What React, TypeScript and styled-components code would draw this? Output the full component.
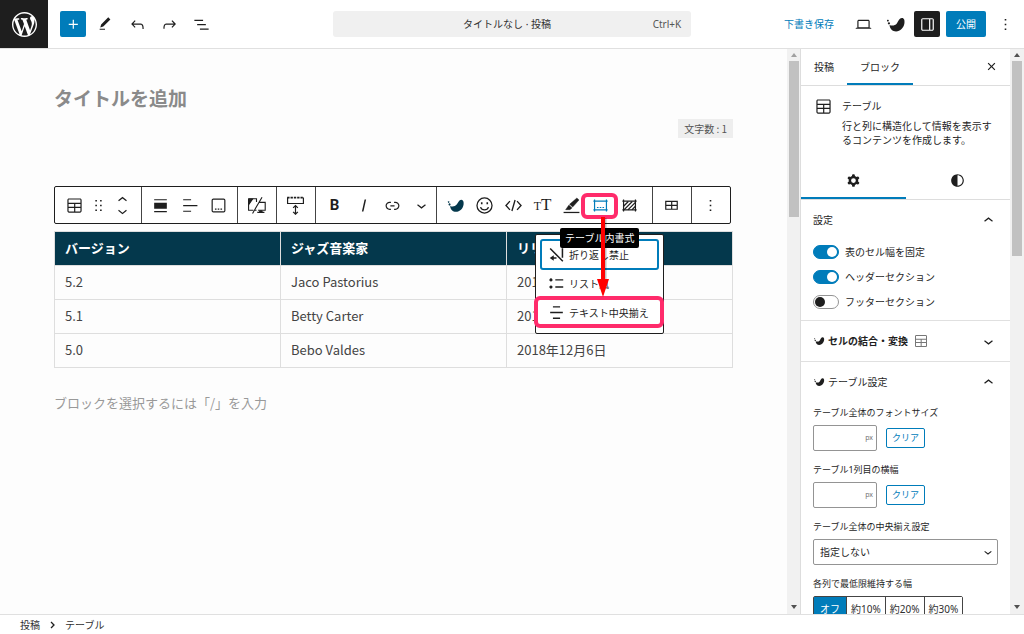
import React, { useState } from "react";
import styled, { createGlobalStyle, css } from "styled-components";

const blue = "#007cba";
const ink = "#1e1e1e";
const navy = "#04384c";
const pink = "#ff2b6b";

const Global = createGlobalStyle`
  * { box-sizing: border-box; }
  body {
    margin: 0;
    background: #fff;
    color: ${ink};
    font: 10px/14px "Noto Sans", "Noto Sans CJK JP", sans-serif;
  }
  button, input, select {
    font: inherit;
    color: inherit;
    margin: 0;
  }
  button {
    background: none;
    border: 0;
    padding: 0;
    cursor: pointer;
  }
  svg { display: block; flex: none; }
`;

/* ---------- icons ---------- */

const paths: Record<string, string> = {
  plus: "M11 12.5V17.5H12.5V12.5H17.5V11H12.5V6H11V11H6V12.5H11Z",
  edit: "M20.1 5.1L16.9 2 6.2 12.7l-1.3 4.4 4.5-1.3L20.1 5.1zM4 20.8h8v-1.5H4v1.5z",
  undo: "M18.3 11.7c-.6-.6-1.4-.9-2.3-.9H6.7l2.9-3.3-1.1-1-4.5 5L8.5 16l1-1-2.7-2.7H16c.5 0 .9.2 1.3.5 1 1 1 3.4 1 4.5v.3h1.5v-.2c0-1.5 0-4.3-1.5-5.7z",
  redo: "M15.6 6.5l-1.1 1 2.9 3.3H8c-.9 0-1.7.3-2.3.9-1.4 1.5-1.4 4.2-1.4 5.6v.2h1.5v-.3c0-1.1 0-3.5 1-4.5.3-.3.7-.5 1.3-.5h9.2L14.5 15l1.1 1.1 4.6-4.6-4.6-5z",
  list: "M3 6h11v1.5H3V6Zm3.5 5.5h11V13h-11v-1.5ZM21 17H10v1.5h11V17Z",
  desktop: "M20.5 16h-.7V8c0-1.1-.9-2-2-2H6.2c-1.1 0-2 .9-2 2v8h-.7c-.8 0-1.5.7-1.5 1.5h20c0-.8-.7-1.5-1.5-1.5zM5.7 8c0-.3.2-.5.5-.5h11.6c.3 0 .5.2.5.5v7.6H5.7V8z",
  drawer: "M18 4H6c-1.1 0-2 .9-2 2v12c0 1.1.9 2 2 2h12c1.1 0 2-.9 2-2V6c0-1.1-.9-2-2-2zm-4 14.5H6c-.3 0-.5-.2-.5-.5V6c0-.3.2-.5.5-.5h8v13zm4.5-.5c0 .3-.2.5-.5.5h-2.5v-13H18c.3 0 .5.2.5.5v12z",
  more: "M13 19h-2v-2h2v2zm0-6h-2v-2h2v2zm0-6h-2V5h2v2z",
  close: "M12 13.06l3.712 3.713 1.061-1.06L13.061 12l3.712-3.712-1.06-1.06L12 10.938 8.288 7.227l-1.061 1.06L10.939 12l-3.712 3.712 1.06 1.061L12 13.061z",
  blockTable: "M19 3H5c-1.1 0-2 .9-2 2v14c0 1.1.9 2 2 2h14c1.1 0 2-.9 2-2V5c0-1.1-.9-2-2-2zM5 4.5h14c.3 0 .5.2.5.5v3.5h-15V5c0-.3.2-.5.5-.5zm8 5.5h6.5v3.5H13V10zm-1.5 3.5h-7V10h7v3.5zm-7 5.5v-4h7v4.5H5c-.3 0-.5-.2-.5-.5zm14.5.5h-6V15h6.5v4c0 .3-.2.5-.5.5z",
  table: "M4 6v11.5h16V6H4zm1.5 1.5h6V11h-6V7.5zm0 8.5v-3.5h6V16h-6zm13 0H13v-3.5h5.5V16zM13 11V7.5h5.5V11H13z",
  drag: "M8 7h2V5H8v2zm0 6h2v-2H8v2zm0 6h2v-2H8v2zm6-14v2h2V5h-2zm0 8h2v-2h-2v2zm0 6h2v-2h-2v2z",
  up: "M6.5 12.4L12 8l5.5 4.4-.9 1.2L12 10l-4.5 3.6-1-1.2z",
  down: "M17.5 11.6L12 16l-5.5-4.4.9-1.2L12 14l4.5-3.6 1 1.2z",
  movers: "M6.5 5.4L12 1l5.5 4.4-.9 1.2L12 3l-4.5 3.6-1-1.2zM17.5 18.6L12 23l-5.5-4.4.9-1.2L12 21l4.5-3.6 1 1.2z",
  align: "M4 5.5h16V4H4v1.5zM4 16h16V8.5H4V16zM4 20.5h16V19H4v1.5z",
  textLeft: "M4 5.5h10V4H4v1.5zM4 12.8h18v-1.5H4v1.5zM4 20h10v-1.5H4V20z",
  italic: "M13.4 4.5L10 19.5h1.9l3.4-15z",
  link: "M15.6 7.2H14v1.5h1.6c2 0 3.7 1.7 3.7 3.7s-1.7 3.7-3.7 3.7H14v1.5h1.6c2.8 0 5.2-2.3 5.2-5.2 0-2.9-2.3-5.2-5.2-5.2zM4.7 12.4c0-2 1.7-3.7 3.7-3.7H10V7.2H8.4c-2.9 0-5.2 2.3-5.2 5.2 0 2.9 2.3 5.2 5.2 5.2H10v-1.5H8.4c-2 0-3.7-1.7-3.7-3.7zm4.6.9h5.3v-1.5H9.3v1.5z",
  bird: "M5.200 12.600c3 1.300 6.500.6 8.300-1.800 2-2.800 2.900-5.800 5.700-6.100 2.600-.2 3.500 2.600 3 6-.8 5.200-4.700 9.300-9.600 9.300-4 0-7-2.800-7.400-7.400zM3.300 6.500a1 1 0 1 0 .01 0zM4.500 9.300a1.300 1.300 0 1 0 .01 0z",
  centerLines: "M7.5 4h9v1.7h-9zM4 11.2h16v1.7H4zM7.5 18.4h9v1.7h-9z",
  listStyle: "M5 5.5a2 2 0 1 0 .01 0zM5 14.5a2 2 0 1 0 .01 0zM10.5 6.6h10v1.7h-10zM10.5 15.6h10v1.7h-10z",
  contrast: "M12 4c-4.4 0-8 3.6-8 8s3.6 8 8 8 8-3.6 8-8-3.6-8-8-8zm0 1.5c3.6 0 6.5 2.9 6.5 6.5s-2.9 6.5-6.5 6.5v-13z",
  cog: "M10.289 4.836A1 1 0 0111.275 4h1.306a1 1 0 01.987.836l.244 1.466c.787.26 1.503.679 2.108 1.218l1.393-.522a1 1 0 011.216.437l.653 1.13a1 1 0 01-.23 1.273l-1.148.944a6.025 6.025 0 010 2.435l1.149.946a1 1 0 01.23 1.272l-.653 1.13a1 1 0 01-1.216.437l-1.394-.522c-.605.54-1.32.958-2.108 1.218l-.244 1.466a1 1 0 01-.987.836h-1.306a1 1 0 01-.986-.836l-.244-1.466a5.995 5.995 0 01-2.108-1.218l-1.394.522a1 1 0 01-1.217-.436l-.653-1.131a1 1 0 01.23-1.272l1.149-.946a6.026 6.026 0 010-2.435l-1.148-.944a1 1 0 01-.23-1.272l.653-1.131a1 1 0 011.217-.437l1.393.522a5.994 5.994 0 012.108-1.218l.244-1.466zM14.929 12a3 3 0 11-6 0 3 3 0 016 0z",
};

const Icon = ({ name, size = 19 }: { name: string; size?: number }) => (
  <svg width={size} height={size} viewBox="0 0 24 24" fill="currentColor" aria-hidden="true">
    <path d={paths[name]} fillRule="evenodd" />
  </svg>
);

const Line = ({ width = 1.5, children }: { width?: number; children: React.ReactNode }) => (
  <svg
    width="19"
    height="19"
    viewBox="0 0 24 24"
    fill="none"
    stroke="currentColor"
    strokeWidth={width}
    aria-hidden="true"
  >
    {children}
  </svg>
);

const CaptionIcon = () => (
  <Line>
    <rect x="4" y="4" width="16" height="16" rx="1.5" />
    <path d="M7.5 16.5h2M11 16.5h2M14.5 16.5h2" />
  </Line>
);

const DeviceIcon = () => (
  <Line width={1.4}>
    <path d="M2 3.5v14.5h6M2 3.5h10v4M15 8h8v10h-9M9 18h3M19 1.5 7 22" />
    <path d="M2 4h5l-5 7z" fill="currentColor" />
    <path d="M13 21.5h9V20h-2l-1-2h-3l-1 2h-2z" fill="currentColor" stroke="none" />
  </Line>
);

const MarginIcon = () => (
  <Line width={1.5}>
    <path d="M2 2v7.5h20V2" />
    <path d="M1.5 2h21" strokeDasharray="3 1.2" strokeWidth="2" />
    <path d="M12 12.5v10M9 15l3-3 3 3M9 20l3 3 3-3" />
  </Line>
);

const SmileIcon = () => (
  <Line width={1.6}>
    <circle cx="12" cy="12" r="9.5" />
    <path d="M7 14c.8 2.5 2.7 3.6 5 3.6s4.2-1.1 5-3.6" />
    <path d="M8.5 7.8v2.5M15.5 7.8v2.5" strokeWidth="2" />
  </Line>
);

const CodeIcon = () => (
  <Line width={1.7}>
    <path d="M7.5 6.5 2.5 12l5 5.5M16.5 6.5l5 5.5-5 5.5M14 5l-4 14" />
  </Line>
);

const MarkerIcon = () => (
  <Line width={1.6}>
    <path d="M2 20.8h20" />
    <path
      d="M18.8 2.5 21.5 5l-8 9-4-3.5zM8.7 11.5l4 3.5-2.7 2.3H4.5z"
      fill="currentColor"
      strokeWidth="0.5"
    />
  </Line>
);

const CellFormatIcon = () => (
  <Line width={1.5}>
    <path d="M4.5 4.5v15M19.5 4.5v15M3 6.5h18M3 17.5h18" />
    <path d="M7.5 14.5h2M11 14.5h2M14.5 14.5h2" />
  </Line>
);

const HatchIcon = () => (
  <Line width={1.5}>
    <path d="M4.5 4.5v15M19.5 4.5v15M3 6.5h18M3 17.5h18" />
    <path d="m4.5 13 6-6M5 17.5 15.5 7M10 17.5l9.500-9.500M15 17.5l4.500-4.500" strokeWidth="1.6" />
  </Line>
);

const NoWrapIcon = () => (
  <Line width={1.9}>
    <path d="M4 4.5 20 20.5M19.5 4v12M12 16.5H5" />
    <path d="M3.5 16.5l5-3.5v7z" fill="currentColor" stroke="none" />
  </Line>
);

const WordPressLogo = () => (
  <svg width="25" height="25" viewBox="0 0 20 20" fill="#fff" aria-hidden="true">
    <path d="M20 10c0-5.51-4.49-10-10-10C4.48 0 0 4.49 0 10c0 5.52 4.48 10 10 10 5.51 0 10-4.48 10-10zM7.78 15.37L4.37 6.22c.55-.02 1.17-.08 1.17-.08.5-.06.44-1.13-.06-1.11 0 0-1.45.11-2.37.11-.18 0-.37 0-.58-.01C4.12 2.69 6.87 1.11 10 1.11c2.33 0 4.45.87 6.05 2.34-.68-.11-1.65.39-1.65 1.58 0 .74.45 1.36.9 2.1.35.61.55 1.36.55 2.46 0 1.49-1.4 5-1.4 5l-3.03-8.37c.54-.02.82-.17.82-.17.5-.05.44-1.25-.06-1.22 0 0-1.44.12-2.38.12-.87 0-2.33-.12-2.33-.12-.5-.03-.56 1.2-.06 1.22l.92.08 1.26 3.41zM17.41 10c.24-.64.74-1.87.43-4.25.7 1.29 1.05 2.71 1.05 4.25 0 3.29-1.73 6.24-4.4 7.78.97-2.59 1.94-5.2 2.92-7.78zM6.1 18.09C3.12 16.65 1.11 13.53 1.11 10c0-1.3.23-2.48.72-3.59C3.25 10.3 4.67 14.2 6.1 18.09zm4.03-6.63l2.58 6.98c-.86.29-1.76.45-2.71.45-.79 0-1.57-.11-2.29-.33.81-2.38 1.62-4.74 2.42-7.1z" />
  </svg>
);

/* ---------- page frame ---------- */

const Shell = styled.div`
  display: flex;
  flex-direction: column;
  height: 100vh;
  overflow: hidden;
`;

const Header = styled.header`
  flex: none;
  display: grid;
  grid-template-columns: 1fr 35% 1fr;
  align-items: center;
  height: 48px;
  box-shadow: 0 1px #e0e0e0;
  position: relative;
`;

const HeaderSide = styled.div<{ $end?: boolean }>`
  display: flex;
  align-items: center;
  height: 100%;
  gap: 6px;
  ${(p) => p.$end && css`
    justify-content: flex-end;
    padding-right: 6px;
  `}
`;

const Home = styled.a`
  display: grid;
  place-items: center;
  width: 48px;
  height: 48px;
  margin-right: 6px;
  background: ${ink};
`;

const HeaderButton = styled.button<{ $fill?: string }>`
  display: grid;
  place-items: center;
  width: 26px;
  height: 26px;
  border-radius: 2px;
  background: ${(p) => p.$fill ?? "transparent"};
  color: ${(p) => (p.$fill ? "#fff" : ink)};
`;

const PublishButton = styled(HeaderButton)`
  width: 40px;
`;

const SaveDraft = styled.button`
  margin-right: 10px;
  color: ${blue};
`;

const CommandBar = styled.button`
  display: grid;
  grid-template-columns: 1fr auto 1fr;
  align-items: center;
  height: 26px;
  padding: 0 10px 0 0;
  border-radius: 3px;
  background: #f0f0f0;
  color: #2f2f2f;
`;

const Shortcut = styled.kbd`
  justify-self: end;
  font: inherit;
  color: #555;
`;

const Body = styled.div`
  flex: 1;
  min-height: 0;
  display: flex;
`;

const Canvas = styled.main`
  flex: 1;
  min-width: 0;
  padding: 35px 54px 0;
  background: #fdfdfd;
  overflow: hidden;
  font-family: "Noto Sans CJK JP", sans-serif;
`;

const Footer = styled.footer`
  flex: none;
  display: flex;
  align-items: center;
  gap: 10px;
  height: 20px;
  padding: 0 20px;
  border-top: 1px solid #e0e0e0;
`;

const Crumb = styled.a`
  color: #2f2f2f;
  text-decoration: none;
`;

/* ---------- scroll bar ---------- */

const Track = styled.div<{ $w: number }>`
  flex: none;
  display: flex;
  flex-direction: column;
  align-items: center;
  width: ${(p) => p.$w}px;
  padding: 5px 0;
  background: #f1f1f1;
`;

const Thumb = styled.div<{ $share: number }>`
  flex: none;
  width: 10px;
  height: ${(p) => p.$share}%;
  margin: 4px 0 auto;
  background: #c1c1c1;
`;

const ScrollBar = ({ share, width, top = "#505050" }: { share: number; width: number; top?: string }) => (
  <Track $w={width}>
    <svg width="6" height="4" viewBox="0 0 6 4"><path d="M0 4l3-4 3 4z" fill={top} /></svg>
    <Thumb $share={share} />
    <svg width="6" height="4" viewBox="0 0 6 4"><path d="M0 0l3 4 3-4z" fill="#505050" /></svg>
  </Track>
);

/* ---------- editor canvas ---------- */

const TitleInput = styled.input`
  display: block;
  width: 100%;
  height: 28px;
  padding: 0;
  border: 0;
  outline: 0;
  background: none;
  font-size: 19px;
  font-weight: 700;
  color: #333;
  &::placeholder { color: #8a8a8a; opacity: 1; }
`;

const Count = styled.div`
  width: fit-content;
  margin: 8px 0 48px auto;
  padding: 0 6px;
  background: #eee;
  color: #555;
  line-height: 19px;
`;

const BlockArea = styled.section`
  position: relative;
`;

const Toolbar = styled.div`
  display: flex;
  width: fit-content;
  height: 38px;
  margin-bottom: 7px;
  border: 1px solid ${ink};
  border-radius: 2px;
  background: #fff;
`;

const Group = styled.div<{ $w: number; $pad?: number }>`
  display: flex;
  align-items: center;
  width: ${(p) => p.$w}px;
  padding-left: ${(p) => p.$pad ?? 4}px;
  & + & { border-left: 1px solid #444; }
`;

const Tool = styled.button<{ $tone?: string; $slim?: boolean }>`
  display: flex;
  align-items: baseline;
  justify-content: center;
  width: ${(p) => (p.$slim ? 24 : 29)}px;
  color: ${(p) => p.$tone ?? ink};
`;

const BoldMark = styled.b`
  font: 700 15px/19px Roboto, sans-serif;
`;

const SerifMark = styled.span<{ $small?: boolean }>`
  font: ${(p) => (p.$small ? 12 : 17)}px/19px "Liberation Serif", serif;
`;

const DataTable = styled.table`
  width: 100%;
  table-layout: fixed;
  border-collapse: collapse;
  font-size: 13px;
  line-height: 18px;
  color: #444;
  th, td {
    height: 34px;
    padding: 0 10px 2px;
    border: 1px solid #dedede;
    text-align: left;
  }
  th {
    background: ${navy};
    color: #fff;
    font-weight: 700;
  }
`;

const Appender = styled.p`
  margin: 25px 0 0;
  color: #999;
  font-size: 13px;
  line-height: 20px;
`;

/* Floating layers, measured from the top left of the block area. */

const Popover = styled.div`
  position: absolute;
  top: 48px;
  left: 481px;
  width: 129px;
  padding: 5px 5px 6px;
  border: 1px solid ${ink};
  border-radius: 2px;
  background: #fff;
  font-family: "Noto Sans", "Noto Sans CJK JP", sans-serif;
`;

const MenuItem = styled.button<{ $focused?: boolean }>`
  display: flex;
  align-items: center;
  gap: 3px;
  width: 100%;
  height: 29px;
  padding-left: 6px;
  border-radius: 2px;
  white-space: nowrap;
  ${(p) => p.$focused && css`outline: 2px solid ${blue}; outline-offset: -1px;`}
`;

const Tooltip = styled.div`
  position: absolute;
  top: 42px;
  left: 506px;
  padding: 0 5px;
  border-radius: 2px;
  background: #000;
  color: #fff;
  line-height: 20px;
`;

const Ring = styled.div<{ $x: number; $y: number; $w: number; $h: number }>`
  position: absolute;
  left: ${(p) => p.$x}px;
  top: ${(p) => p.$y}px;
  width: ${(p) => p.$w}px;
  height: ${(p) => p.$h}px;
  border: 4px solid ${pink};
  border-radius: 6px;
  pointer-events: none;
`;

const Arrow = styled.svg`
  position: absolute;
  top: 31px;
  left: 541px;
  pointer-events: none;
`;

/* ---------- settings sidebar ---------- */

const Sidebar = styled.aside`
  flex: none;
  width: 210px;
  border-left: 1px solid #ddd;
  overflow: hidden;
  background: #fff;
`;

const TabBar = styled.div`
  display: flex;
  align-items: stretch;
  height: 38px;
  padding-right: 9px;
  border-bottom: 1px solid #ddd;
`;

const Tab = styled.button<{ $active?: boolean }>`
  display: grid;
  place-items: center;
  padding: 0 13px;
  box-shadow: ${(p) => (p.$active ? `inset 0 -2px ${blue}` : "none")};
`;

const CloseButton = styled.button`
  margin-left: auto;
`;

const Card = styled.div`
  display: flex;
  gap: 9px;
  padding: 11px 12px 0 13px;
`;

const CardTitle = styled.h2`
  margin: 2px 0 6px;
  font-size: 10px;
  font-weight: 400;
`;

const CardText = styled.p`
  margin: 0;
`;

const IconTabs = styled.div`
  display: grid;
  grid-template-columns: 1fr 1fr;
  height: 38px;
  margin-top: 15px;
  border-bottom: 1px solid #ddd;
`;

const Panel = styled.section`
  padding: 0 12px;
  & + & { border-top: 1px solid #e0e0e0; }
`;

const PanelHead = styled.button<{ $bold?: boolean }>`
  display: flex;
  align-items: center;
  width: 100%;
  height: 40px;
  gap: 3px;
  font-weight: ${(p) => (p.$bold ? 700 : 400)};
  & > :last-child { margin-left: auto; }
`;

const PanelBody = styled.div`
  padding: 4px 0 1px;
`;

const MutedIcon = styled.span`
  margin-left: 2px;
  color: #777;
`;

const ToggleRow = styled.label`
  display: flex;
  align-items: center;
  gap: 6px;
  height: 16px;
  margin-bottom: 9px;
`;

const Toggle = styled.input`
  appearance: none;
  width: 26px;
  height: 14px;
  border: 1px solid #949494;
  border-radius: 7px;
  background: #fff;
  &::before {
    content: "";
    display: block;
    width: 10px;
    height: 10px;
    margin: 1px;
    border-radius: 50%;
    background: ${ink};
  }
  &:checked {
    border-color: ${blue};
    background: ${blue};
  }
  &:checked::before {
    margin-left: 13px;
    background: #fff;
  }
`;

const Label = styled.label`
  display: block;
  height: 14px;
  margin-bottom: 5px;
  font-size: 9px;
`;

const Field = styled.div`
  margin-bottom: 12px;
`;

const FieldRow = styled.div`
  display: flex;
  align-items: center;
  gap: 9px;
`;

const UnitBox = styled.div`
  display: flex;
  align-items: center;
  width: 64px;
  height: 26px;
  padding: 0 3px;
  border: 1px solid #949494;
  border-radius: 2px;
`;

const NumberInput = styled.input`
  flex: 1;
  min-width: 0;
  padding: 0;
  border: 0;
  outline: 0;
  background: none;
`;

const Unit = styled.span`
  font-size: 7px;
  color: #757575;
`;

const ClearButton = styled.button`
  height: 20px;
  padding: 0 5px;
  border: 1px solid ${blue};
  border-radius: 2px;
  color: ${blue};
  font-size: 9px;
`;

const SelectWrap = styled.div`
  display: grid;
  align-items: center;
  & > * { grid-area: 1 / 1; }
  & > svg { justify-self: end; margin-right: 2px; pointer-events: none; }
`;

const Select = styled.select`
  appearance: none;
  width: 100%;
  height: 26px;
  padding: 0 6px;
  border: 1px solid #949494;
  border-radius: 2px;
  background: #fff;
`;

const Segments = styled.div`
  display: flex;
  width: fit-content;
  border: 1px solid #444;
  border-radius: 2px;
`;

const Segment = styled.button<{ $on?: boolean }>`
  min-width: 32px;
  height: 23px;
  padding: 0 4px;
  background: ${(p) => (p.$on ? blue : "#fff")};
  color: ${(p) => (p.$on ? "#fff" : "#2f2f2f")};
  & + & { border-left: 1px solid #444; }
`;

const rows = [
  ["5.2", "Jaco Pastorius", "2019年5月7日"],
  ["5.1", "Betty Carter", "2019年2月21日"],
  ["5.0", "Bebo Valdes", "2018年12月6日"],
];

const widths = ["オフ", "約10%", "約20%", "約30%"];

const SizeField = ({ id, label }: { id: string; label: string }) => (
  <Field>
    <Label htmlFor={id}>{label}</Label>
    <FieldRow>
      <UnitBox>
        <NumberInput id={id} />
        <Unit>px</Unit>
      </UnitBox>
      <ClearButton>クリア</ClearButton>
    </FieldRow>
  </Field>
);

export default function App() {
  const [minWidth, setMinWidth] = useState("オフ");
  return (
    <Shell>
      <Global />
      <Header>
        <HeaderSide>
          <Home href="#" aria-label="WordPress"><WordPressLogo /></Home>
          <HeaderButton $fill={blue} aria-label="追加"><Icon name="plus" /></HeaderButton>
          <HeaderButton aria-label="ツール"><Icon name="edit" size={16} /></HeaderButton>
          <HeaderButton aria-label="元に戻す"><Icon name="undo" /></HeaderButton>
          <HeaderButton aria-label="やり直す"><Icon name="redo" /></HeaderButton>
          <HeaderButton aria-label="リスト表示"><Icon name="list" /></HeaderButton>
        </HeaderSide>
        <CommandBar>
          <span />
          <span>タイトルなし · 投稿</span>
          <Shortcut>Ctrl+K</Shortcut>
        </CommandBar>
        <HeaderSide $end>
          <SaveDraft>下書き保存</SaveDraft>
          <HeaderButton aria-label="プレビュー"><Icon name="desktop" /></HeaderButton>
          <HeaderButton aria-label="SWELL"><Icon name="bird" size={21} /></HeaderButton>
          <HeaderButton $fill={ink} aria-label="設定"><Icon name="drawer" /></HeaderButton>
          <PublishButton $fill={blue}>公開</PublishButton>
          <HeaderButton aria-label="オプション"><Icon name="more" /></HeaderButton>
        </HeaderSide>
      </Header>

      <Body>
        <Canvas>
          <TitleInput aria-label="タイトル" placeholder="タイトルを追加" />
          <Count>文字数 : 1</Count>
          <BlockArea>
            <Toolbar role="toolbar">
              <Group $w={86} $pad={7}>
                <Tool $slim aria-label="テーブル"><Icon name="blockTable" /></Tool>
                <Tool $slim aria-label="ドラッグ"><Icon name="drag" /></Tool>
                <Tool $slim aria-label="移動"><Icon name="movers" /></Tool>
              </Group>
              <Group $w={96}>
                <Tool aria-label="配置"><Icon name="align" /></Tool>
                <Tool aria-label="文字の配置"><Icon name="textLeft" /></Tool>
                <Tool aria-label="キャプション"><CaptionIcon /></Tool>
              </Group>
              <Group $w={39}><Tool aria-label="デバイス制限"><DeviceIcon /></Tool></Group>
              <Group $w={39}><Tool aria-label="余白"><MarginIcon /></Tool></Group>
              <Group $w={121}>
                <Tool aria-label="太字"><BoldMark>B</BoldMark></Tool>
                <Tool aria-label="イタリック"><Icon name="italic" /></Tool>
                <Tool aria-label="リンク"><Icon name="link" /></Tool>
                <Tool aria-label="さらに表示"><Icon name="down" /></Tool>
              </Group>
              <Group $w={216}>
                <Tool $tone={navy} aria-label="SWELL装飾"><Icon name="bird" /></Tool>
                <Tool aria-label="絵文字"><SmileIcon /></Tool>
                <Tool aria-label="コード"><CodeIcon /></Tool>
                <Tool aria-label="文字サイズ">
                  <SerifMark $small>T</SerifMark><SerifMark>T</SerifMark>
                </Tool>
                <Tool aria-label="マーカー"><MarkerIcon /></Tool>
                <Tool $tone={blue} aria-label="テーブル内書式"><CellFormatIcon /></Tool>
                <Tool aria-label="セル背景"><HatchIcon /></Tool>
              </Group>
              <Group $w={39}><Tool aria-label="表を編集"><Icon name="table" /></Tool></Group>
              <Group $w={39}><Tool aria-label="オプション"><Icon name="more" /></Tool></Group>
            </Toolbar>

            <DataTable>
              <thead>
                <tr><th>バージョン</th><th>ジャズ音楽家</th><th>リリース日</th></tr>
              </thead>
              <tbody>
                {rows.map((row) => (
                  <tr key={row[0]}>{row.map((cell) => <td key={cell}>{cell}</td>)}</tr>
                ))}
              </tbody>
            </DataTable>

            <Popover role="menu">
              <MenuItem role="menuitem" $focused><NoWrapIcon />折り返し禁止</MenuItem>
              <MenuItem role="menuitem"><Icon name="listStyle" />リスト風</MenuItem>
              <MenuItem role="menuitem"><Icon name="centerLines" />テキスト中央揃え</MenuItem>
            </Popover>
            <Tooltip role="tooltip">テーブル内書式</Tooltip>
            <Ring $x={527} $y={7} $w={37} $h={26} />
            <Ring $x={480} $y={110} $w={130} $h={32} />
            <Arrow width="16" height="82" viewBox="0 0 16 82" aria-hidden="true">
              <path d="M9 1v64" stroke="#000" strokeOpacity="0.25" strokeWidth="5" />
              <path d="M6 0h4v62h4L8 80 2 62h4z" fill="#f00" />
            </Arrow>
          </BlockArea>
          <Appender>ブロックを選択するには「/」を入力</Appender>
        </Canvas>
        <ScrollBar share={28} width={13} top="#a0a0a0" />

        <Sidebar>
          <TabBar role="tablist">
            <Tab role="tab">投稿</Tab>
            <Tab role="tab" $active>ブロック</Tab>
            <CloseButton aria-label="閉じる"><Icon name="close" /></CloseButton>
          </TabBar>
          <Card>
            <Icon name="blockTable" />
            <div>
              <CardTitle>テーブル</CardTitle>
              <CardText>行と列に構造化して情報を表示するコンテンツを作成します。</CardText>
            </div>
          </Card>
          <IconTabs role="tablist">
            <Tab role="tab" $active aria-label="設定"><Icon name="cog" /></Tab>
            <Tab role="tab" aria-label="スタイル"><Icon name="contrast" /></Tab>
          </IconTabs>

          <Panel>
            <PanelHead>設定<Icon name="up" /></PanelHead>
            <PanelBody>
              <ToggleRow><Toggle type="checkbox" role="switch" defaultChecked />表のセル幅を固定</ToggleRow>
              <ToggleRow><Toggle type="checkbox" role="switch" defaultChecked />ヘッダーセクション</ToggleRow>
              <ToggleRow><Toggle type="checkbox" role="switch" />フッターセクション</ToggleRow>
            </PanelBody>
          </Panel>
          <Panel>
            <PanelHead $bold>
              <Icon name="bird" size={12} />セルの結合・変換
              <MutedIcon><Icon name="blockTable" size={16} /></MutedIcon>
              <Icon name="down" />
            </PanelHead>
          </Panel>
          <Panel>
            <PanelHead><Icon name="bird" size={12} />テーブル設定<Icon name="up" /></PanelHead>
            <PanelBody>
              <SizeField id="font-size" label="テーブル全体のフォントサイズ" />
              <SizeField id="first-col" label="テーブル1列目の横幅" />
              <Field>
                <Label htmlFor="centering">テーブル全体の中央揃え設定</Label>
                <SelectWrap>
                  <Select id="centering"><option>指定しない</option></Select>
                  <Icon name="down" size={16} />
                </SelectWrap>
              </Field>
              <Label as="div" id="min-width">各列で最低限維持する幅</Label>
              <Segments role="group" aria-labelledby="min-width">
                {widths.map((w) => (
                  <Segment key={w} $on={w === minWidth} onClick={() => setMinWidth(w)}>{w}</Segment>
                ))}
              </Segments>
            </PanelBody>
          </Panel>
        </Sidebar>
        <ScrollBar share={35} width={14} />
      </Body>

      <Footer>
        <Crumb href="#">投稿</Crumb>
        <svg width="5" height="8" viewBox="0 0 5 8" fill="none" stroke={ink} strokeWidth="1.3">
          <path d="M1 1l3 3-3 3" />
        </svg>
        <Crumb href="#">テーブル</Crumb>
      </Footer>
    </Shell>
  );
}
